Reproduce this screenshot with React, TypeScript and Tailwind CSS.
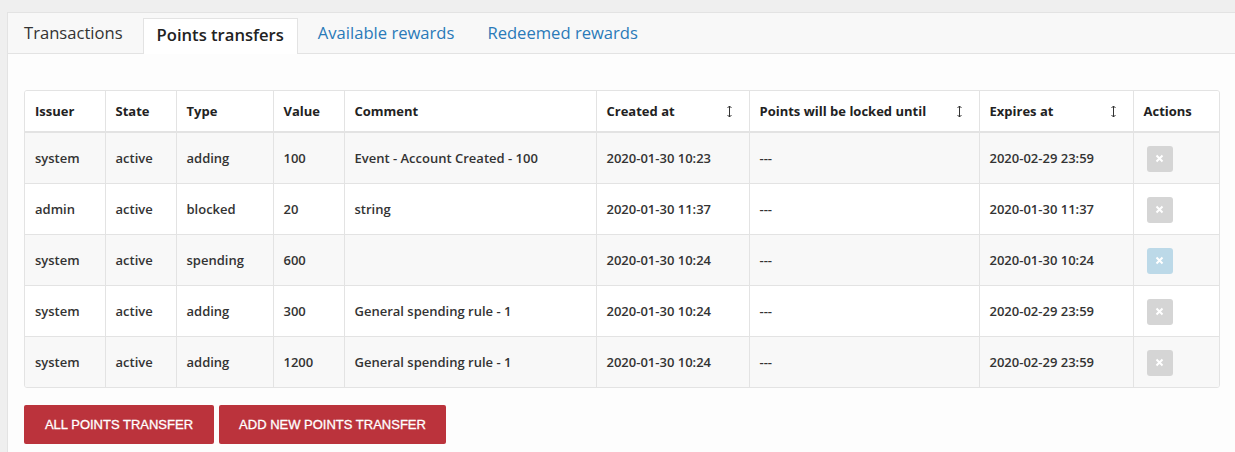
import React from "react";

const rows = [
    { issuer: "system", state: "active", type: "adding", value: "100", comment: "Event - Account Created - 100", created: "2020-01-30 10:23", locked: "---", expires: "2020-02-29 23:59", blue: false },
    { issuer: "admin", state: "active", type: "blocked", value: "20", comment: "string", created: "2020-01-30 11:37", locked: "---", expires: "2020-01-30 11:37", blue: false },
    { issuer: "system", state: "active", type: "spending", value: "600", comment: "", created: "2020-01-30 10:24", locked: "---", expires: "2020-01-30 10:24", blue: true },
    { issuer: "system", state: "active", type: "adding", value: "300", comment: "General spending rule - 1", created: "2020-01-30 10:24", locked: "---", expires: "2020-02-29 23:59", blue: false },
    { issuer: "system", state: "active", type: "adding", value: "1200", comment: "General spending rule - 1", created: "2020-01-30 10:24", locked: "---", expires: "2020-02-29 23:59", blue: false },
];

const SortIcon = () => (
    <svg width="7" height="13" viewBox="0 0 7 13" className="text-[#333]">
        <path d="M3.5 1 V12" stroke="currentColor" strokeWidth="1" />
        <path d="M1.5 3 L3.5 1 L5.5 3" stroke="currentColor" strokeWidth="1" fill="none" />
        <path d="M1.5 10 L3.5 12 L5.5 10" stroke="currentColor" strokeWidth="1" fill="none" />
    </svg>
);

const Head = ({ label, sort, w }: { label: string; sort?: boolean; w: string }) => (
    <th className={`${w} border border-[#e3e3e3] border-b-2 px-[10px] pt-[1px] h-[41px] text-left font-bold text-[13px] text-[#222]`}>
        <div className="flex items-center justify-between pr-[6px]">
            <span>{label}</span>
            {sort && <SortIcon />}
        </div>
    </th>
);

const RemoveButton = ({ blue }: { blue: boolean }) => (
    <button className={`w-[26px] h-[26px] rounded-[3px] flex items-center justify-center ${blue ? "bg-[#bcd9e8]" : "bg-[#d5d5d5]"}`}>
        <svg width="9" height="9" viewBox="0 0 9 9">
            <path d="M1.5 1.5 L7.5 7.5 M7.5 1.5 L1.5 7.5" stroke="white" strokeWidth="2" />
        </svg>
    </button>
);

export default function App() {
    const cell = "border border-[#e3e3e3] px-[10px] pt-[2px] h-[51px] text-[13px] font-semibold text-[#333]";

    return (
        <div className="min-h-[452px] bg-[#efefef] pt-[12px] pl-[7px] font-['Open_Sans',sans-serif]">
            <div className="bg-[#fdfdfd] border-t border-l border-[#e3e3e3] min-h-[440px]">
                <div className="flex items-end gap-[7px] pl-[3px] h-[41px] bg-[#f8f8f8] border-b border-[#e3e3e3]">
                    <div className="px-[13px] h-[36px] pb-[4px] flex items-center text-[16.6px] font-medium text-[#333]">Transactions</div>
                    <div className="px-[13px] h-[36px] -mb-px pb-[2px] flex items-center text-[16.6px] font-semibold text-[#222] bg-white border border-b-0 border-[#e3e3e3]">Points transfers</div>
                    <div className="px-[13px] h-[36px] pb-[4px] flex items-center text-[16.6px] font-medium text-[#2a7ab8]">Available rewards</div>
                    <div className="px-[13px] h-[36px] pb-[4px] flex items-center text-[16.6px] font-medium text-[#2a7ab8]">Redeemed rewards</div>
                </div>

                <div className="pl-[16px] pt-[36px]">
                    <div className="w-[1196px] rounded-[3px] overflow-hidden border border-[#e3e3e3]">
                        <table className="w-full table-fixed border-collapse border-hidden">
                            <thead>
                                <tr className="bg-white">
                                    <Head label="Issuer" w="w-[80px]" />
                                    <Head label="State" w="w-[71px]" />
                                    <Head label="Type" w="w-[97px]" />
                                    <Head label="Value" w="w-[71px]" />
                                    <Head label="Comment" w="w-[252px]" />
                                    <Head label="Created at" sort w="w-[153px]" />
                                    <Head label="Points will be locked until" sort w="w-[230px]" />
                                    <Head label="Expires at" sort w="w-[154px]" />
                                    <Head label="Actions" w="w-[88px]" />
                                </tr>
                            </thead>
                            <tbody>
                                {rows.map((r, i) => (
                                    <tr key={i} className={i % 2 === 0 ? "bg-[#f8f8f8]" : "bg-white"}>
                                        <td className={cell}>{r.issuer}</td>
                                        <td className={cell}>{r.state}</td>
                                        <td className={cell}>{r.type}</td>
                                        <td className={cell}>{r.value}</td>
                                        <td className={cell}>{r.comment}</td>
                                        <td className={cell}>{r.created}</td>
                                        <td className={cell}>{r.locked}</td>
                                        <td className={cell}>{r.expires}</td>
                                        <td className={`${cell} pl-[13px]`}>
                                            <RemoveButton blue={r.blue} />
                                        </td>
                                    </tr>
                                ))}
                            </tbody>
                        </table>
                    </div>

                    <div className="flex gap-[5px] mt-[17px] font-['Liberation_Sans',sans-serif]">
                        <button className="w-[190px] h-[39px] rounded-[2px] bg-[#bb333c] text-white text-[13px] [-webkit-text-stroke:0.3px_white]">ALL POINTS TRANSFER</button>
                        <button className="w-[227px] h-[39px] rounded-[2px] bg-[#bb333c] text-white text-[13px] [-webkit-text-stroke:0.3px_white]">ADD NEW POINTS TRANSFER</button>
                    </div>
                </div>
            </div>
        </div>
    );
}
